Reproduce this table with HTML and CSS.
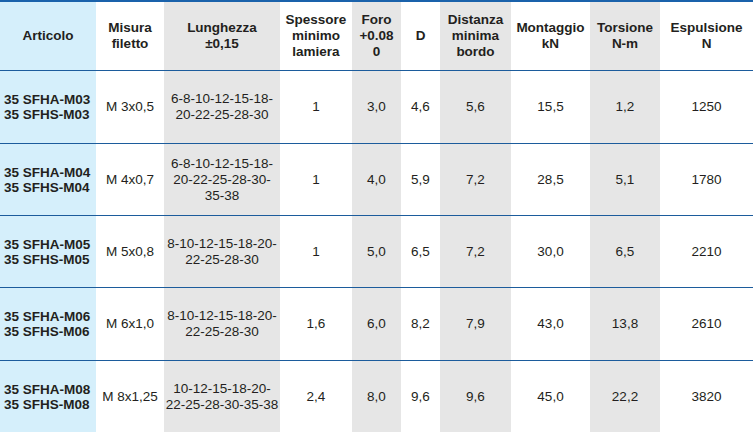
FILE: index.html
```html
<!DOCTYPE html>
<html lang="it">
<head>
<meta charset="utf-8">
<title>Tabella SFHA / SFHS</title>
<link rel="stylesheet" href="styles.css">
</head>
<body>
<table class="spec">
  <colgroup>
    <col class="c-art">
    <col class="c-mis">
    <col class="c-lun">
    <col class="c-spe">
    <col class="c-for">
    <col class="c-d">
    <col class="c-dis">
    <col class="c-mon">
    <col class="c-tor">
    <col class="c-esp">
  </colgroup>
  <thead>
    <tr>
      <th class="blue">Articolo</th>
      <th>Misura<br>filetto</th>
      <th class="grey">Lunghezza<br>±0,15</th>
      <th>Spessore<br>minimo<br>lamiera</th>
      <th class="grey">Foro<br>+0.08<br>0</th>
      <th>D</th>
      <th class="grey">Distanza<br>minima<br>bordo</th>
      <th>Montaggio<br>kN</th>
      <th class="grey">Torsione<br>N-m</th>
      <th>Espulsione<br>N</th>
    </tr>
  </thead>
  <tbody>
    <tr class="r-a">
      <td class="blue art">35 SFHA-M03<br>35 SFHS-M03</td>
      <td>M 3x0,5</td>
      <td class="grey">6-8-10-12-15-18-<br>20-22-25-28-30</td>
      <td>1</td>
      <td class="grey">3,0</td>
      <td>4,6</td>
      <td class="grey">5,6</td>
      <td>15,5</td>
      <td class="grey">1,2</td>
      <td>1250</td>
    </tr>
    <tr class="r-b">
      <td class="blue art">35 SFHA-M04<br>35 SFHS-M04</td>
      <td>M 4x0,7</td>
      <td class="grey">6-8-10-12-15-18-<br>20-22-25-28-30-<br>35-38</td>
      <td>1</td>
      <td class="grey">4,0</td>
      <td>5,9</td>
      <td class="grey">7,2</td>
      <td>28,5</td>
      <td class="grey">5,1</td>
      <td>1780</td>
    </tr>
    <tr class="r-b">
      <td class="blue art">35 SFHA-M05<br>35 SFHS-M05</td>
      <td>M 5x0,8</td>
      <td class="grey">8-10-12-15-18-20-<br>22-25-28-30</td>
      <td>1</td>
      <td class="grey">5,0</td>
      <td>6,5</td>
      <td class="grey">7,2</td>
      <td>30,0</td>
      <td class="grey">6,5</td>
      <td>2210</td>
    </tr>
    <tr class="r-a">
      <td class="blue art">35 SFHA-M06<br>35 SFHS-M06</td>
      <td>M 6x1,0</td>
      <td class="grey">8-10-12-15-18-20-<br>22-25-28-30</td>
      <td>1,6</td>
      <td class="grey">6,0</td>
      <td>8,2</td>
      <td class="grey">7,9</td>
      <td>43,0</td>
      <td class="grey">13,8</td>
      <td>2610</td>
    </tr>
    <tr class="r-a last">
      <td class="blue art">35 SFHA-M08<br>35 SFHS-M08</td>
      <td>M 8x1,25</td>
      <td class="grey">10-12-15-18-20-<br>22-25-28-30-35-38</td>
      <td>2,4</td>
      <td class="grey">8,0</td>
      <td>9,6</td>
      <td class="grey">9,6</td>
      <td>45,0</td>
      <td class="grey">22,2</td>
      <td>3820</td>
    </tr>
  </tbody>
</table>
</body>
</html>
```

FILE: styles.css
```css
html, body {
  margin: 0;
  padding: 0;
  background: #ffffff;
}

body {
  font-family: "Liberation Sans", Arial, sans-serif;
  font-size: 13.5px;
  color: #231f20;
  overflow: hidden;
}

.spec {
  width: 753px;
  table-layout: fixed;
  border-collapse: separate;
  border-spacing: 0;
}

.c-art { width: 96px; }
.c-mis { width: 68px; }
.c-lun { width: 116px; }
.c-spe { width: 72px; }
.c-for { width: 49px; }
.c-d   { width: 39px; }
.c-dis { width: 71px; }
.c-mon { width: 79px; }
.c-tor { width: 70px; }
.c-esp { width: 93px; }

.spec th,
.spec td {
  padding: 0;
  text-align: center;
  vertical-align: middle;
  box-sizing: border-box;
}

.spec th {
  font-weight: bold;
  line-height: 16px;
  height: 71px;
  border-top: 2px solid #1a62ab;
  border-bottom: 1px solid #1c5c9c;
}

.spec td {
  font-weight: normal;
  line-height: 16px;
  border-bottom: 1px solid #1c5c9c;
}

.r-a td { height: 73px; }
.r-b td { height: 72px; }
.last td { border-bottom: none; height: 72px; }

.spec .art {
  text-align: left;
  padding-left: 4px;
  font-weight: bold;
  line-height: 15px;
}

.blue { background: #d5effb; }
.grey { background: #e6e6e6; }
```
